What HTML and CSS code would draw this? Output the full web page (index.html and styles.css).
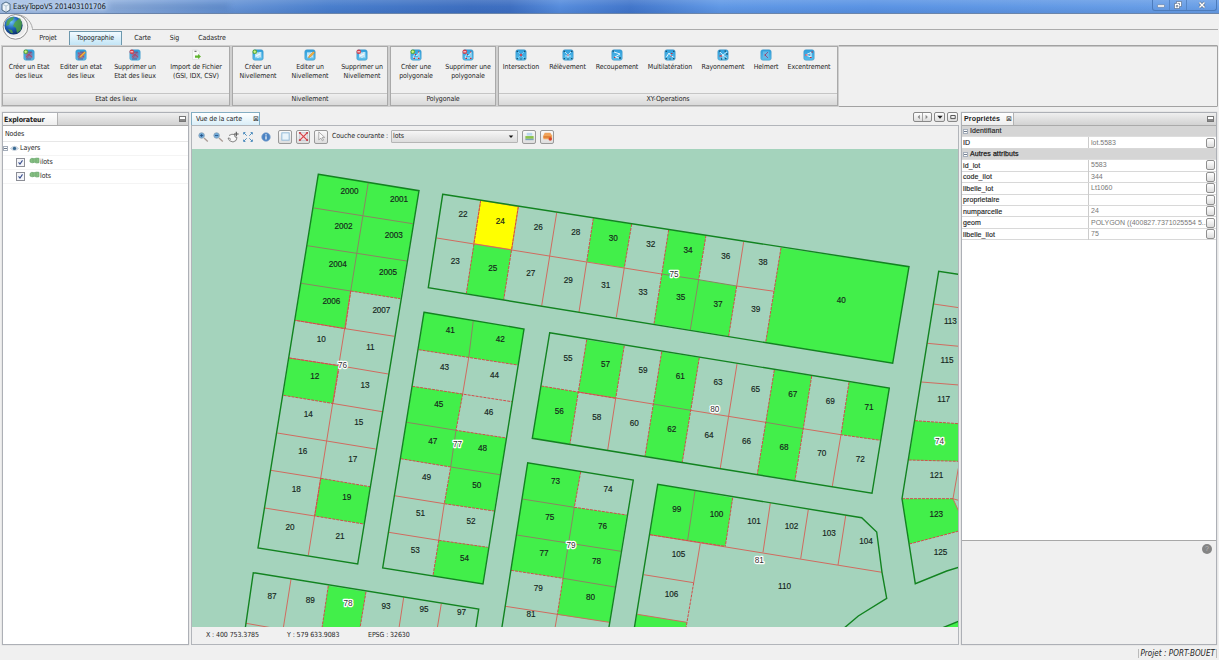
FILE: index.html
```html
<!DOCTYPE html>
<html lang="fr">
<head>
<meta charset="utf-8">
<title>EasyTopoV5</title>
<link rel="stylesheet" href="styles.css">
</head>
<body>
<svg class="defs" width="0" height="0">
  <defs>
    <linearGradient id="tile" x1="0" y1="0" x2="0" y2="1"><stop offset="0" stop-color="#2f9fdc"/><stop offset="1" stop-color="#58bdea"/></linearGradient>
    <radialGradient id="globe" cx=".38" cy=".3" r=".75"><stop offset="0" stop-color="#6fc4f5"/><stop offset=".5" stop-color="#1f62b8"/><stop offset="1" stop-color="#082a62"/></radialGradient>
    <symbol id="base" viewBox="0 0 12 12"><rect x=".8" y=".8" width="10.4" height="10.4" rx="2" fill="url(#tile)" stroke="#3d93c4" stroke-width=".5"/></symbol>
    <symbol id="etat" viewBox="0 0 12 12"><use href="#base"/><path d="M2.500 3h7v6.500h-7z" fill="#8a6f9c" opacity=".75"/><path d="M3 8l3-3 3 3M4 9l4-6M3 4l6 4" stroke="#b0486a" stroke-width=".8" fill="none"/><path d="M5 3h4M3 10h5" stroke="#5c4b86" stroke-width=".8"/></symbol>
    <symbol id="niv" viewBox="0 0 12 12"><use href="#base"/><rect x="3" y="3" width="6.600" height="6.200" fill="#8fd0ef"/><path d="M4 4v4M6 4v5M8 3v5M4 7l4-2" stroke="#fff" stroke-width=".9" fill="none"/></symbol>
    <symbol id="poly" viewBox="0 0 12 12"><use href="#base"/><path d="M3 8l2-3 2 2 2-4v6H4z" stroke="#d6effb" stroke-width=".9" fill="none"/><path d="M3.600 9.300h1.400M8 9.300h1.400M8 3h1.200M4.800 5.500h1.200" stroke="#d02635" stroke-width="1.200"/></symbol>
    <symbol id="add" viewBox="0 0 12 12"><circle cx="2.800" cy="2.800" r="2.300" fill="#55a838"/><path d="M2.800 1.400v2.800M1.400 2.800h2.800" stroke="#eaff9a" stroke-width=".9"/></symbol>
    <symbol id="del" viewBox="0 0 12 12"><circle cx="2.800" cy="2.800" r="2.300" fill="#d4404c"/><path d="M1.400 2.800h2.800" stroke="#fff" stroke-width=".9"/></symbol>
    <symbol id="pen" viewBox="0 0 12 12"><path d="M4.500 8.800l.5-2 4.500-4.300 1.200 1.200-4.500 4.500z" fill="#f4b23d" stroke="#b66d22" stroke-width=".4"/></symbol>
    <symbol id="dots" viewBox="0 0 12 12"><path d="M1.600 2.300H3M9 2.300h1.400M1.600 9.700H3M9 9.700h1.400M5.300 10h1.400" stroke="#1d5270" stroke-width="1.200"/></symbol>
    <symbol id="mag" viewBox="0 0 12 12"><circle cx="4.600" cy="4.500" r="2.800" fill="#6da9d8" stroke="#8fa5b8" stroke-width=".8"/><path d="M7 7l3.800 3.500" stroke="#a99b95" stroke-width="1.300"/></symbol>
    <symbol id="layer" viewBox="0 0 11 8"><path d="M1 2.500Q2.500.5 5 1.700q2.500-.9 5-.4v4.400q-2.500.8-4.500-.4Q3 6.500 1 5z" fill="#86bf82" stroke="#6aa76e" stroke-width=".7"/><path d="M4 1.800v3.500M7 1.700v3.600" stroke="#5c9c64" stroke-width=".5"/></symbol>
  </defs>
</svg>
<div class="app">
  <header class="titlebar">
    <svg class="appicon" viewBox="0 0 10 12"><path d="M1 3l4-2 4 2v6L5 11.300 1 9z" fill="#eef4f9" stroke="#3f5f7a" stroke-width=".9"/><path d="M1.300 3.200L5 5l3.700-1.800M5 5v6" stroke="#8ba5ba" stroke-width=".6" fill="none"/></svg>
    <span class="apptitle">EasyTopoV5 201403101706</span>
    <div class="ghost"></div>
    <div class="winbtns">
      <span><svg viewBox="0 0 12 10"><rect x="2.500" y="4.800" width="7" height="2.400" rx=".6" fill="#fff" stroke="#51637c" stroke-width=".5"/></svg></span>
      <span><svg viewBox="0 0 12 10"><path d="M4.500 1.500h5v5h-2v2h-5v-5h2z" fill="#fff" stroke="#51637c" stroke-width=".6"/><path d="M4.300 5.500h1.500v1.400H4.300zM5.500 3.400h2v2" fill="none" stroke="#51637c" stroke-width=".7"/></svg></span>
      <span class="close"><svg viewBox="0 0 12 10"><path d="M3.500 2.500l5 5M8.500 2.500l-5 5" stroke="#51637c" stroke-width="2.500"/><path d="M3.500 2.500l5 5M8.500 2.500l-5 5" stroke="#fff" stroke-width="1.500"/></svg></span>
    </div>
  </header>
  <section class="ribbon">
    <div class="quick">
      <svg class="orb" viewBox="0 0 34 28"><path d="M14 .7C24 0 31 6 32.500 14.700" fill="none" stroke="#a9a9a9"/><circle cx="15.500" cy="12.900" r="12.300" fill="#ececec" stroke="#929292"/><circle cx="15.500" cy="12.900" r="11" fill="none" stroke="#fff"/><circle cx="13.500" cy="11.500" r="9.100" fill="url(#globe)"/><path d="M7 7q3-4 7-4l-1 3-3 2-1 3-3 1zM15 8l5-4 2 5-1 7-4 3-1-5-3-2zM8 15l4 1 1 3-2 0z" fill="#52a83c" opacity=".8"/></svg>
    </div>
    <nav class="tabs">
      <span class="tab t1">Projet</span><span class="tab t2 on">Topographie</span><span class="tab t3">Carte</span><span class="tab t4">Sig</span><span class="tab t5">Cadastre</span>
    </nav>
    <div class="groups">
      <div class="group g1"><div class="btns">
        <div class="btn"><svg viewBox="0 0 12 12"><use href="#etat"/><use href="#add"/></svg><span>Créer un Etat<br>des lieux</span></div>
        <div class="btn"><svg viewBox="0 0 12 12"><use href="#etat"/><use href="#pen"/></svg><span>Editer un etat<br>des lieux</span></div>
        <div class="btn w56"><svg viewBox="0 0 12 12"><use href="#etat"/><use href="#del"/></svg><span>Supprimer un<br>Etat des lieux</span></div>
        <div class="btn w66"><svg viewBox="0 0 12 12"><path d="M2.500 1h5l2 2v7.500h-7z" fill="#f8f8f8" stroke="#d5d5d5" stroke-width=".5"/><path d="M4.500 2.300h2" stroke="#555"/><path d="M5 6.500h3V5l3 2.500L8 10V8.700H5z" fill="#60b52f"/></svg><span>Import de Fichier<br>(GSI, IDX, CSV)</span></div>
      </div><div class="gname">Etat des lieux</div></div>
      <div class="group g2"><div class="btns">
        <div class="btn"><svg viewBox="0 0 12 12"><use href="#niv"/><use href="#add"/></svg><span>Créer un<br>Nivellement</span></div>
        <div class="btn"><svg viewBox="0 0 12 12"><use href="#niv"/><use href="#pen"/></svg><span>Editer un<br>Nivellement</span></div>
        <div class="btn"><svg viewBox="0 0 12 12"><use href="#niv"/><use href="#del"/></svg><span>Supprimer un<br>Nivellement</span></div>
      </div><div class="gname">Nivellement</div></div>
      <div class="group g3"><div class="btns">
        <div class="btn"><svg viewBox="0 0 12 12"><use href="#poly"/><use href="#add"/></svg><span>Créer une<br>polygonale</span></div>
        <div class="btn"><svg viewBox="0 0 12 12"><use href="#poly"/><use href="#del"/></svg><span>Supprimer une<br>polygonale</span></div>
      </div><div class="gname">Polygonale</div></div>
      <div class="group g4"><div class="btns">
        <div class="btn w46"><svg viewBox="0 0 12 12"><use href="#base"/><use href="#dots"/><path d="M3 3l6 6M9 3L3 9" stroke="#9bdcf8" stroke-width=".7"/><path d="M6 4.800v2.400M4.800 6h2.400" stroke="#e02230" stroke-width="1.100"/></svg><span>Intersection</span></div>
        <div class="btn w47"><svg viewBox="0 0 12 12"><use href="#base"/><use href="#dots"/><path d="M3 3l3 3 3-3M6 6v3M3 7h6" stroke="#e0f5ff" stroke-width=".8" fill="none"/><path d="M5.300 6h1.400" stroke="#d02635" stroke-width="1.200"/></svg><span>Rélèvement</span></div>
        <div class="btn"><svg viewBox="0 0 12 12"><use href="#base"/><path d="M3 3l6 2-5 3 4 1" stroke="#e0f5ff" fill="none"/><path d="M1.500 2.200H3M8 9h2" stroke="#1d5270" stroke-width="1.300"/><path d="M3 8.500h1.400" stroke="#d02635" stroke-width="1.200"/></svg><span>Recoupement</span></div>
        <div class="btn w54"><svg viewBox="0 0 12 12"><use href="#base"/><use href="#dots"/><path d="M2.500 8L5 4l2 3 2.500 1" stroke="#e7f7ff" fill="none"/><path d="M7 4.500h1.500M6.500 7h1.400" stroke="#d02635" stroke-width="1.100"/></svg><span>Multilatération</span></div>
        <div class="btn"><svg viewBox="0 0 12 12"><use href="#base"/><path d="M6 6L3 3M6 6l4-3M6 6l4 3M6 6L3 8M6 6v4" stroke="#e7f7ff" stroke-width=".8"/><path d="M2 2.200h1.500M7.500 2.200H9M9.300 5h1.500M8 9.500h1.500M4 10h1.200" stroke="#1d5270" stroke-width="1.300"/><path d="M2.500 7H5" stroke="#d02635" stroke-width="1.200"/></svg><span>Rayonnement</span></div>
        <div class="btn w34"><svg viewBox="0 0 12 12"><use href="#base"/><rect x="3" y="2.500" width="6" height="7" fill="#66b8e4"/><path d="M8 3L5 6l3 3" stroke="#7d5b92" fill="none"/><path d="M4.500 6h1.300" stroke="#d02635"/></svg><span>Helmert</span></div>
        <div class="btn"><svg viewBox="0 0 12 12"><use href="#base"/><path d="M2.500 6L8 3.500V8M2.500 6L8 8" stroke="#e7f7ff" fill="none"/><path d="M2 6h2.500M7 8.500h1.500M8.500 3H10" stroke="#d02635" stroke-width="1.200"/></svg><span>Excentrement</span></div>
      </div><div class="gname">XY-Operations</div></div>
    </div>
  </section>
  <main class="main">
    <aside class="panel explorer">
      <div class="phead"><span class="ptab">Explorateur</span><i class="mini"></i></div>
      <div class="nodes">Nodes</div>
      <div class="tree">
        <div class="row root"><i class="expander"></i><svg class="eye" viewBox="0 0 10 7"><path d="M.5 3.500Q5-1.500 9.500 3.500 5 8 .5 3.500z" fill="#d6e2ee" stroke="#9cadbd" stroke-width=".5"/><circle cx="5" cy="3.400" r="1.900" fill="#386890"/></svg><span>Layers</span></div>
        <div class="row"><i class="check"><svg viewBox="0 0 8 8"><path d="M1.800 3.800l1.600 2L6.300 1.600" fill="none" stroke="#354c8c" stroke-width="1.200"/></svg></i><svg class="lay" viewBox="0 0 11 8"><use href="#layer"/></svg><span>ilots</span></div>
        <div class="row"><i class="check"><svg viewBox="0 0 8 8"><path d="M1.800 3.800l1.600 2L6.300 1.600" fill="none" stroke="#354c8c" stroke-width="1.200"/></svg></i><svg class="lay" viewBox="0 0 11 8"><use href="#layer"/></svg><span>lots</span></div>
      </div>
    </aside>
    <section class="center">
      <div class="ctabs"><span class="ctab">Vue de la carte<i class="x">⊠</i></span>
        <div class="nav"><i class="nb pair"><svg viewBox="0 0 18 9"><path d="M6 2L3.500 4.500 6 7zM12.500 2L15 4.500 12.500 7z" fill="#888"/><path d="M9 0v9" stroke="#999"/></svg></i><i class="nb"><svg viewBox="0 0 9 9"><path d="M1.500 3h6L4.500 6.500z" fill="#222"/></svg></i><i class="nb"><svg viewBox="0 0 9 9"><path d="M2 2.800h5v3.500H2z" fill="none" stroke="#444"/></svg></i></div></div>
      <div class="view">
        <div class="toolbar">
          <svg class="tool" viewBox="0 0 12 12"><use href="#mag"/><path d="M3 4.500h3.200M4.600 3v3" stroke="#234d80" stroke-width=".8"/></svg>
          <svg class="tool" viewBox="0 0 12 12"><use href="#mag"/><path d="M3 4.500h3.200" stroke="#234d80" stroke-width=".8"/></svg>
          <svg class="tool" viewBox="0 0 12 12"><path d="M2 4.500q3-2 5.500-1L8 6l2 .5-1 3-3 1.500-3.500-1.300L1 7l1.500.3L4 8.500" fill="#f8f8f8" stroke="#777" stroke-width=".9"/><path d="M9.300.7v4.600M7 3h4.600" stroke="#555" stroke-width="1.100"/></svg>
          <svg class="tool" viewBox="0 0 12 12"><path d="M1.300 3.800V1.300h2.500zM8.200 1.300h2.500v2.500zM1.300 8.200v2.500h2.500zM8.200 10.700h2.500V8.200z" fill="#2672ae"/><path d="M2 2l2.700 2.700M10 2L7.300 4.700M2 10l2.700-2.700M10 10L7.300 7.300" stroke="#4f8fc0" stroke-width="1"/></svg>
          <svg class="tool info" viewBox="0 0 12 12"><circle cx="6" cy="6" r="4.300" fill="#4b83c3" stroke="#8babd0" stroke-width=".7"/><path d="M6 5.300v3.200M6 3.200v1.200" stroke="#fff" stroke-width="1.200"/></svg>
          <span class="tb"><svg viewBox="0 0 12 12"><rect x="2" y="2" width="8" height="8" fill="#e9f4fb" stroke="#8fb8d6"/></svg></span>
          <span class="tb"><svg viewBox="0 0 12 12"><rect x="2" y="2" width="8" height="8" fill="#f2e3e3" stroke="#9baac0" stroke-width=".5"/><path d="M2 2l8 8M10 2l-8 8" stroke="#d8434a" stroke-width="1.300"/><path d="M1 1h2v2H1zM9 1h2v2H9zM1 9h2v2H1zM9 9h2v2H9z" fill="#c4474e"/></svg></span>
          <span class="tb"><svg viewBox="0 0 12 12"><path d="M3 1l6.500 6H6.700l1.500 3-1.300.7L5.400 7.800 3 9.700z" fill="#fafafa" stroke="#888" stroke-width=".7"/></svg></span>
          <label class="lbl">Couche courante :</label>
          <span class="combo">lots<svg viewBox="0 0 8 6"><path d="M1 1.500h6L4 5z" fill="#111"/></svg></span>
          <span class="tb"><svg viewBox="0 0 12 12"><path d="M3 2h6v3H3z" fill="#b9d9ee"/><path d="M1.500 5.500h9v3h-9z" fill="#8bc34d"/><path d="M1.500 8.500h9v1.500h-9z" fill="#7ca1bb"/></svg></span>
          <span class="tb"><svg viewBox="0 0 12 12"><path d="M3 2h6l2 3v4H1.500V5z" fill="#f0a35b"/><path d="M1.500 5.500H10v2H1.500z" fill="#e08236"/><circle cx="9" cy="8.800" r="1.900" fill="#d8462c"/></svg></span>
        </div>
        <svg class="map" viewBox="192 149 766 478" preserveAspectRatio="none">
          <g class="built">
            <path d="M318.300 174.300L419 190.700L400.300 298.700L350.700 291L345.300 328.700L295.300 320.300z"/>
            <path d="M289.300 358L339.300 365.700L333 403.500L283.300 395.300zM320.700 478.300L370 486.700L363.700 524L314.700 516z"/>
            <path d="M593.300 218.300L631.700 224L624.300 267.700L586.700 261.700zM473.700 243.700L511.700 249.700L503.700 299.700L466.300 293.300z"/>
            <path d="M668.700 229.700L706 235.300L698.700 279.700L736.700 286L728.700 336L654 323.700zM781 247.700L909 266.700L892.700 363.300L765.700 342.300z"/>
            <path d="M424 312.300L524 329L517.700 365L418.700 349.700zM412.300 386.300L462.700 393.700L456 430.300L506.300 438L494 511L444.300 503.700L450.700 467L400.700 458.700zM438.700 540.300L488.500 547.300L483 584L433 575.700z"/>
            <path d="M586.700 339.700L624.300 345.700L615.700 398.300L578.300 392zM661.700 351.700L699.300 357.700L682.300 462L645 456zM774.300 370L811.700 376L795 480.300L757.300 474.300L765.700 422.300zM849 382.300L889.300 388L880.300 440.300L841 434.700zM541.300 386L578.300 392L570 443.700L532.300 438.300z"/>
            <path d="M527.700 462.700L580.700 471.700L574.300 507.300L626.700 515L609.300 622.300L557.300 614.700L563 578.300L511 570.300z"/>
            <path d="M657.700 484.300L732.700 497.700L725.300 546.300L650 534.700zM637.300 614.300L686.700 622.300L686 628H634.500zM328.300 585.700L366 591.700L360 628H322z"/>
            <path d="M915 420.700L959 423.700V461.300L908.700 460zM902 498.700H953L959 511.700V531L909.300 544zM943 628L959 621.300V628z"/>
          </g>
          <path class="picked" d="M480.700 200.300L518.300 206.700L511.700 249.700L473.700 243.700z"/>
          <path class="soft" d="M368.300 182.500L350.700 291M314 208L362.300 215.700L412.700 223.700M307.300 245.700L356.700 253.300L406.700 261M301.300 283.300L350.700 291M661.700 274L698.700 279.700L736.700 286M698.700 279.700L690.300 329.700M473.300 320.500L468.700 357.700M406.700 422.300L456 430.300L450.700 467L500 474.700M653 404L690.700 410.300M765.700 422.300L803 428.700M522.300 499L574.300 507.300L563 578.300L615 587M516.700 535L621 551.300M695 491L687.700 540"/>
          <path class="lots" d="M350.700 291L308.300 555.300M295.300 320.300L345.300 328.700L394.300 336.300M289.300 358L339.300 365.700L388.300 374M333 403.500L382.300 411.700M277.300 433L326.700 441L375.700 449M270.700 470.300L320.700 478.300M264.700 508L314.700 516
            M436.700 238L661.700 274M736.700 286L774.300 291.300M556.700 212.700L541.700 305.700M586.700 261.700L579 312M624.300 267.700L616.300 317.300M743.700 241.700L736.700 286
            M468.700 357.700L462.700 393.700M394.300 495.700L444.300 503.700L438.700 540.300M388.700 532.300L438.700 540.300
            M578.300 392L653 404M690.700 410.300L765.700 422.300M803 428.700L841 434.700M615.700 398.300L607.700 450M737 364L720.300 468M841 434.700L832.300 486.300
            M505.300 606.300L609.300 622.300M557.300 614.700L555 628M770.300 503.300L763 552.300M808.300 509.700L800.700 558.700M845.700 515.700L838 565M650 534.700L882 572.300M700.300 543.300L693.700 582.700M643.700 574.700L693.700 582.700M637.300 614.300L686.700 622.300
            M291 579.300L283.300 628M403.700 597.300L399 628M441.300 603.700L437.300 628M246 623.300L272.700 628
            M933.700 304L959 307.700M927.300 343.300L959 346.300M921.300 382L959 385M958.300 468.300L953 498.700L959 512M953 498.700L959 500.500"/>
          <path class="edge" d="M350.700 291L400.300 298.700M350.700 291L345.300 328.700L295.300 320.300M289.300 358L339.300 365.700L333 403.500L283.300 395.300M320.700 478.300L370 486.700M320.700 478.300L314.700 516L363.700 524
            M480.700 200.300L466.300 293.300M518.300 206.700L503.700 299.700M593.300 218.300L586.700 261.700M631.700 224L624.300 267.700M668.700 229.700L654 323.700M706 235.300L698.700 279.700M736.700 286L728.700 336M781 247.700L765.700 342.300
            M418.700 349.700L517.700 365M412.300 386.300L512 401.700M462.700 393.700L456 430.300L506.300 438M400.700 458.700L450.700 467L444.300 503.700L494 511M438.700 540.300L487.700 547.300M438.700 540.300L433 575.700
            M586.700 339.700L570 443.700M624.300 345.700L615.700 398.300M661.700 351.700L645 456M699.300 357.700L682.300 462M774.300 370L757.300 474.300M811.700 376L795 480.300M849 382.300L841 434.700L880.300 440.300M541.300 386L615.700 398.300
            M580.700 471.700L574.300 507.300L626.700 515M511 570.300L563 578.300L557.300 614.700M732.700 497.700L725.300 546.300M650 534.700L725.300 546.300M693.700 582.700L686 628M328.300 585.700L322 628M366 591.700L360 628M915 420.700L959 423.700M908.700 460L959 461.300M902 498.700H953M909.300 544L959 531"/>
          <path class="ilots" d="M318.300 174.300L419 190.700L357.700 564L258 548zM442.700 194.300L909 266.700L892.700 363.300L428.300 287.700zM424 312.300L524 329L483 584L382.700 568zM549.700 332.700L889.300 388L872 493.300L532.300 438.300zM501.500 630L527.700 462.700L633.300 480L608.500 630M634 630L657.700 484.300L861.700 517.700L876.700 532L882 572.300L886.700 598.300L858.300 616L843 629M245 630L253.300 572.700L478.700 609L475.500 630M960 274.500L938.700 271.300L902 498.700L915.300 583.700L946.700 571L960 567M942 628L960 620.800"/>
          <g class="nums">
            <text x="349.500" y="193.700">2000</text><text x="399" y="202">2001</text><text x="343.500" y="229.300">2002</text><text x="393.700" y="237.700">2003</text><text x="337.700" y="267">2004</text><text x="388" y="275">2005</text><text x="331.300" y="304.300">2006</text><text x="381.300" y="312.700">2007</text>
            <text x="321.300" y="341.700">10</text><text x="370.300" y="350">11</text><text x="314.700" y="379.300">12</text><text x="365" y="387.500">13</text><text x="308.300" y="416.700">14</text><text x="358.700" y="425">15</text><text x="302.700" y="454">16</text><text x="352.700" y="462.300">17</text><text x="296.300" y="491.700">18</text><text x="346.700" y="500">19</text><text x="290" y="530.300">20</text><text x="340" y="538.700">21</text>
            <text x="463" y="217.300">22</text><text x="500.300" y="223.700">24</text><text x="538.300" y="229.500">26</text><text x="575.700" y="235">28</text><text x="613.300" y="241.300">30</text><text x="650.700" y="247">32</text><text x="688" y="252.700">34</text><text x="725.700" y="259">36</text><text x="763" y="264.700">38</text><text x="841.300" y="303.300">40</text>
            <text x="455.300" y="264">23</text><text x="492.700" y="270.700">25</text><text x="530.700" y="276.300">27</text><text x="568.300" y="282.700">29</text><text x="605.700" y="288.300">31</text><text x="643" y="294.700">33</text><text x="680.700" y="300.300">35</text><text x="718" y="306.700">37</text><text x="755.700" y="312.300">39</text>
            <text x="450.300" y="333.300">41</text><text x="500.300" y="341.500">42</text><text x="444.500" y="370.300">43</text><text x="494.500" y="378.300">44</text><text x="438.700" y="406.500">45</text><text x="488.700" y="415">46</text><text x="432.700" y="443.500">47</text><text x="482.500" y="451">48</text><text x="426.500" y="479.500">49</text><text x="476.700" y="488">50</text><text x="420.500" y="515.700">51</text><text x="471" y="524">52</text><text x="415.300" y="552.700">53</text><text x="464.500" y="561">54</text>
            <text x="568" y="361.300">55</text><text x="605.500" y="367">57</text><text x="643" y="373.300">59</text><text x="680.300" y="379.300">61</text><text x="718" y="385.300">63</text><text x="755.500" y="391.500">65</text><text x="792.700" y="397.300">67</text><text x="830.300" y="404">69</text><text x="869" y="410">71</text>
            <text x="559.300" y="413.500">56</text><text x="596.700" y="419.500">58</text><text x="634.300" y="425.500">60</text><text x="671.700" y="432">62</text><text x="709" y="438.300">64</text><text x="746.500" y="444">66</text><text x="784" y="450.300">68</text><text x="821.700" y="456">70</text><text x="860.300" y="462.300">72</text>
            <text x="555.500" y="484">73</text><text x="608" y="492">74</text><text x="549.700" y="519.500">75</text><text x="602.500" y="528.500">76</text><text x="544" y="556">77</text><text x="596.500" y="564">78</text><text x="538.300" y="591">79</text><text x="590.500" y="599.500">80</text><text x="531" y="616.700">81</text>
            <text x="676.700" y="511.500">99</text><text x="716.500" y="517.300">100</text><text x="754" y="523.500">101</text><text x="791.500" y="529.300">102</text><text x="829" y="535.500">103</text><text x="866" y="544">104</text><text x="678.500" y="557">105</text><text x="671.500" y="597">106</text><text x="784.500" y="589.300">110</text>
            <text x="272" y="599">87</text><text x="310.300" y="603">89</text><text x="386" y="609">93</text><text x="424" y="612.300">95</text><text x="461.500" y="615">97</text>
            <text x="950.300" y="324.300">113</text><text x="947" y="363.300">115</text><text x="943.700" y="402">117</text><text x="936.500" y="478">121</text><text x="936.300" y="517">123</text><text x="940.500" y="555">125</text>
          </g>
          <g class="nums halo"><text x="342.500" y="368">76</text><text x="674" y="276.500">75</text><text x="457.500" y="446.500">77</text><text x="714.700" y="412">80</text><text x="571" y="548">79</text><text x="759.300" y="563.300">81</text><text x="348" y="606">78</text><text x="939.500" y="443.500">74</text></g>
        </svg>
        <div class="coords"><span class="cx">X : 400 753.3785</span><span class="cy">Y : 579 633.9083</span><span>EPSG : 32630</span></div>
      </div>
    </section>
    <aside class="panel props">
      <div class="phead"><span class="ptab">Propriétés<i class="x">⊠</i></span><i class="mini"></i></div>
      <div class="sheet">
        <div class="cat"><i class="expander"></i>Identifiant</div>
        <div class="prop"><b>ID</b><span>lot.5583</span><i></i></div>
        <div class="cat strong"><i class="expander"></i>Autres attributs</div>
        <div class="prop"><b>id_lot</b><span>5583</span><i></i></div>
        <div class="prop"><b>code_ilot</b><span>344</span><i></i></div>
        <div class="prop"><b>libelle_lot</b><span>Lt1060</span><i></i></div>
        <div class="prop"><b>proprietaire</b><span></span><i></i></div>
        <div class="prop"><b>numparcelle</b><span>24</span><i></i></div>
        <div class="prop"><b>geom</b><span>POLYGON ((400827.7371025554 5...</span><i></i></div>
        <div class="prop"><b>libelle_ilot</b><span>75</span><i></i></div>
      </div>
      <div class="desc"><span class="help">?</span></div>
    </aside>
  </main>
  <footer class="status"><span>Projet : PORT-BOUET</span></footer>
</div>
</body>
</html>
```
FILE: styles.css
```css
* { box-sizing: border-box; }
body { margin: 0; background: #f0f0f0; color: #252525; font: 7px/9px "DejaVu Sans Condensed", "DejaVu Sans", sans-serif; letter-spacing: -.1px; overflow: hidden; }
i { font-style: normal; }
svg { display: block; flex: none; }
.defs { position: absolute; }
.app { width: 1219px; height: 660px; display: flex; flex-direction: column; white-space: nowrap; }

.titlebar { height: 14px; flex: none; display: flex; align-items: center; padding-left: 1px; background: linear-gradient(180deg, rgba(255,255,255,.12), transparent 50%, rgba(20,60,130,.12)), linear-gradient(90deg, #a9c2e4 0, #9bb9e3 100px, #6f9ad8 210px, #4a7fcd 330px, #3e6fc0 470px, #3f70c2 510px, #578ddd 560px, #4377cb 630px, #6199e6 720px, #5b94e4 870px, #6ba0e7 1219px); border-bottom: 1px solid #6b85aa; }
.appicon { width: 10px; height: 12px; }
.apptitle { margin-left: 2px; font-size: 7.600px; color: #101820; text-shadow: 0 0 4px #fff; width: 96px; }
.ghost { width: 120px; height: 5px; background: rgba(30,65,120,.22); filter: blur(3px); }
.winbtns { margin: 0 2px 3px auto; display: flex; height: 11px; border: 1px solid #4c7bbb; border-top: 0; border-radius: 0 0 3px 3px; }
.winbtns span { width: 17px; display: flex; align-items: center; justify-content: center; border-right: 1px solid #5686c6; }
.winbtns .close { width: 29px; border: 0; }
.winbtns svg { width: 12px; height: 10px; }

.ribbon { height: 93px; flex: none; padding: 0 1px; display: flex; flex-direction: column; }
.quick { height: 16px; margin-left: 31px; border-bottom: 1px solid #ababab; }
.orb { width: 34px; height: 28px; margin-left: -32px; position: relative; z-index: 2; }
.tabs { height: 15px; display: flex; align-items: flex-end; padding-left: 26px; }
.tab { height: 14px; padding-top: 3px; text-align: center; }
.t1 { width: 42px; } .t2 { width: 53px; } .t3 { width: 41px; } .t4 { width: 23px; } .t5 { width: 52px; }
.tab.on { border: 1px solid #6d98ad; border-bottom: 0; padding-top: 2px; background: linear-gradient(#f1faff, #c3e5f6); }
.groups { height: 62px; border: 1px solid #a2a2a2; display: flex; gap: 2px; border-radius: 1px; box-shadow: inset 0 1px #c7c7c7; }
.group { display: flex; flex-direction: column; border: 1px solid #a9a9a9; box-shadow: 0 0 0 1px #cfcfcf; }
.g1 { width: 228px; } .g2 { width: 156px; } .g3 { width: 106px; } .g4 { width: 340px; }
.btns { flex: 1; display: flex; }
.group + .group .btns { margin-left: -1px; }
.btn { width: 52px; display: flex; flex-direction: column; align-items: center; padding-top: 2px; text-align: center; flex: none; }
.btn svg { width: 12px; height: 12px; margin-bottom: 2px; }
.btn.w34 { width: 34px; } .btn.w46 { width: 46px; } .btn.w47 { width: 47px; } .btn.w54 { width: 54px; } .btn.w56 { width: 56px; } .btn.w66 { width: 66px; }
.gname { height: 12px; border-top: 1px solid #c5c5c5; text-align: center; line-height: 11px; background: linear-gradient(#efefef, #d9d9d9); }

.main { height: 533px; margin-top: 5px; flex: none; display: flex; padding: 0 2px; }
.panel { border: 1px solid #adb0b6; background: #fff; display: flex; flex-direction: column; box-shadow: 0 0 0 .5px #ddd; flex: none; }
.explorer { width: 187px; }
.phead { height: 13px; flex: none; display: flex; justify-content: space-between; align-items: center; background: linear-gradient(#efefef, #d2d2d2); border-bottom: 1px solid #aaa; padding-right: 2px; }
.ptab { height: 12px; width: 55px; padding-left: 1px; background: linear-gradient(#fff, #eee); border-right: 1px solid #b3b3b3; font-weight: bold; font-size: 7.100px; line-height: 13px; letter-spacing: -.15px; }
.mini { width: 7px; height: 6px; border: 1px solid #777; background: #fff; box-shadow: inset 0 -2px #888; }
.x { font: 7px "DejaVu Sans", sans-serif; color: #333; margin-left: 11px; }
.props .x { margin-left: 6px; }
.nodes { height: 16px; line-height: 16px; padding-left: 2px; border-bottom: 1px solid #e7e7e7; }
.row { height: 14px; display: flex; align-items: center; padding-left: 13px; border-bottom: 1px solid #f4f4f4; }
.row.root { padding-left: 0; }
.expander { width: 5px; height: 5px; border: 1px solid #a5aebb; background: linear-gradient(#6f7b8b, #6f7b8b) center / 3px 1px no-repeat #fff; flex: none; }
.eye { width: 9px; height: 7px; margin: 0 1px 0 2px; }
.check { width: 9px; height: 9px; border: 1px solid #8c8e96; background: #f4f5f9; }
.check svg { width: 7px; height: 7px; }
.lay { width: 11px; height: 8px; margin: -4px 0 0 4px; }

.center { width: 768px; margin-left: 2px; display: flex; flex-direction: column; flex: none; }
.ctabs { height: 13px; display: flex; justify-content: space-between; align-items: flex-end; }
.ctab { height: 13px; width: 69px; padding: 2px 0 0 4px; border: 1px solid #83adc2; border-bottom: 0; background: linear-gradient(#fff, #d9eef8); }
.nav { display: flex; gap: 2px; padding: 0 1px 3px 0; }
.nb { border: 1px solid #888; border-radius: 2px; background: linear-gradient(#fff, #ddd); height: 10px; width: 11px; display: flex; align-items: center; justify-content: center; }
.nb.pair { width: 19px; }
.nb svg { height: 8px; width: 8px; }
.nb.pair svg { width: 17px; }
.view { flex: 1; border: 1px solid #b2b5ba; display: flex; flex-direction: column; }
.toolbar { height: 23px; display: flex; align-items: center; padding: 0 0 2px 5px; }
.tool { width: 12px; height: 12px; margin-right: 3px; }
.info { margin: 0 6px 0 3px; }
.tb { width: 14px; height: 14px; border: 1px solid #999; border-radius: 2px; background: linear-gradient(#fafafa, #ddd); display: flex; align-items: center; justify-content: center; margin-right: 4px; flex: none; }
.tb svg { width: 11px; height: 11px; }
.lbl { width: 59px; }
.combo { width: 127px; height: 13px; margin-right: 4px; border: 1px solid #b5b5b5; background: linear-gradient(#f6f6f6, #dcdcdc); display: flex; justify-content: space-between; align-items: center; padding: 0 3px 0 1px; border-radius: 1px; flex: none; }
.combo svg { width: 6px; height: 5px; }
.map { width: 766px; height: 478px; background: #a4d3bc; overflow: hidden; }
.built { fill: #42ef4a; }
.picked { fill: #ff0; stroke: #e39c31; }
.soft, .lots, .edge, .ilots { fill: none; stroke-width: 1; }
.soft { stroke: #8b8562; }
.lots { stroke: #d06b5f; }
.edge { stroke: #d14d4a; stroke-dasharray: 3 1; }
.ilots { stroke: #128320; stroke-width: 1.400; }
.nums { font: 8.200px "Liberation Sans", Arial, sans-serif; fill: #15251b; stroke: #15251b; stroke-width: .15px; text-anchor: middle; }
.halo { stroke: #fff; stroke-width: 2.500px; paint-order: stroke; stroke-linejoin: round; fill: #333; }
.coords { flex: 1; display: flex; align-items: center; padding-left: 14px; }
.cx, .cy { width: 81px; }

.props { width: 256px; margin-left: 2px; font: 7px/10px "Liberation Sans", Arial, sans-serif; letter-spacing: .1px; }
.props .ptab { width: 52px; padding-left: 2px; letter-spacing: .1px; }
.sheet { flex: 1; }
.cat { height: 11.400px; background: #d5d5d5; display: flex; align-items: center; gap: 2px; padding-left: 1px; border-bottom: 1px solid #ddd; -webkit-text-stroke: .15px #222; }
.strong { -webkit-text-stroke: .25px #222; }
.prop { height: 11.450px; display: flex; align-items: center; border-bottom: 1px solid #d8d8d8; }
.prop b { width: 127px; flex: none; padding-left: 1px; font-weight: normal; border-right: 1px solid #ccc; line-height: 11px; -webkit-text-stroke: .15px #222; }
.prop span { flex: 1; min-width: 0; padding-left: 2px; color: #777; letter-spacing: 0; }
.prop i { width: 9px; height: 10px; flex: none; border: 1px solid #909090; border-radius: 2px; background: linear-gradient(#fff, #ddd); margin-right: 1px; }
.desc { height: 104px; border-top: 1px solid #a8a8a8; background: #f0f0f0; display: flex; justify-content: flex-end; padding: 3px 4px; }
.help { width: 10px; height: 10px; border-radius: 50%; background: #858585; color: #bbb; text-align: center; line-height: 10px; }
.status { flex: 1; display: flex; justify-content: flex-end; align-items: center; padding: 2px 2px 0 0; font-size: 8px; letter-spacing: .05px; font-style: oblique; }
.status span { border-left: 1px solid #bbb; border-right: 1px solid #bbb; padding: 0 1px; }
```
